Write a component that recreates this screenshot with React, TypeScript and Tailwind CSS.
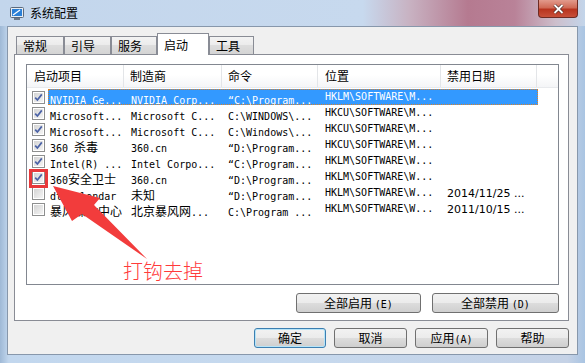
import React from 'react';

const CJK = /([\u2E80-\u9FFF\uFF00-\uFFEF]+)/;

type Row = {
  on: boolean;
  name: string;
  maker: string;
  cmd: string;
  loc: string;
  date?: string;
  sel?: boolean;
};

const rows: Row[] = [
  { on: true, name: 'NVIDIA Ge...', maker: 'NVIDIA Corp...', cmd: '“C:\\Program...', loc: 'HKLM\\SOFTWARE\\M...', sel: true },
  { on: true, name: 'Microsoft...', maker: 'Microsoft C...', cmd: 'C:\\WINDOWS\\...', loc: 'HKCU\\SOFTWARE\\M...' },
  { on: true, name: 'Microsoft...', maker: 'Microsoft C...', cmd: 'C:\\Windows\\...', loc: 'HKCU\\SOFTWARE\\M...' },
  { on: true, name: '360 杀毒', maker: '360.cn', cmd: '“D:\\Program...', loc: 'HKCU\\SOFTWARE\\M...' },
  { on: true, name: 'Intel(R) ...', maker: 'Intel Corpo...', cmd: '“C:\\Program...', loc: 'HKLM\\SOFTWARE\\W...' },
  { on: true, name: '360安全卫士', maker: '360.cn', cmd: '“D:\\Program...', loc: 'HKLM\\SOFTWARE\\W...' },
  { on: false, name: 'dt Calendar', maker: '未知', cmd: '“D:\\Program...', loc: 'HKLM\\SOFTWARE\\W...', date: '2014/11/25 ...' },
  { on: false, name: '暴风媒体中心', maker: '北京暴风网...', cmd: 'C:\\Program ...', loc: 'HKLM\\SOFTWARE\\W...', date: '2011/10/15 ...' },
];

// SimSun-like mix: ascii in a mono face, hanzi in a CJK face
function Mixed({ text }: { text: string }) {
  const parts = text.split(CJK);
  return (
    <>
      {parts.map((p, i) =>
        i % 2 === 1 ? (
          <span key={i} className="font-['Noto_Sans_CJK_SC',sans-serif] text-[12px]">{p}</span>
        ) : (
          <span key={i} className="font-['DejaVu_Sans_Mono',monospace] text-[10px] whitespace-pre">{p}</span>
        )
      )}
    </>
  );
}

function CheckBox({ on }: { on: boolean }) {
  return (
    <div className="w-[13px] h-[13px] border border-[#8e8f8f] bg-white p-px">
      <div className="w-full h-full bg-[linear-gradient(135deg,#d4d4d4,#f4f4f4)] flex items-center justify-center">
        {on && (
          <svg width="9" height="9" viewBox="0 0 9 9">
            <path d="M1.2 4.6 L3.4 7 L7.8 1.4" fill="none" stroke="#4b62a6" strokeWidth="1.7" />
          </svg>
        )}
      </div>
    </div>
  );
}

function Button({ label, w, focus }: { label: React.ReactNode; w: string; focus?: boolean }) {
  return (
    <div
      className={`${w} h-[20px] rounded-[3px] border ${
        focus ? 'border-[#3c7fb1] shadow-[inset_0_0_0_1px_#b6e4f8]' : 'border-[#707070]'
      } bg-[linear-gradient(#f2f2f2,#ebebeb_50%,#dddddd_50%,#cfcfcf)] flex items-center justify-center text-[12px] text-black leading-none`}
    >
      {label}
    </div>
  );
}

function Tab({ label, w, sel }: { label: string; w: string; sel?: boolean }) {
  return (
    <div
      className={`${w} border border-b-0 border-[#898c95] flex items-center pl-[6px] text-[12px] font-['Noto_Sans_CJK_SC',sans-serif] leading-none ${
        sel ? 'h-[22px] -mb-px bg-white relative z-10' : 'h-[18px] bg-[linear-gradient(#f3f3f3,#ebebeb_50%,#dddddd_50%,#d4d4d4)]'
      }`}
    >
      {label}
    </div>
  );
}

const headers = [
  { t: '启动项目', w: 'w-[97px]', p: 'pl-[7px]' },
  { t: '制造商', w: 'w-[98px]', p: 'pl-[6px]' },
  { t: '命令', w: 'w-[96px]', p: 'pl-[6px]' },
  { t: '位置', w: 'w-[123px]', p: 'pl-[7px]' },
  { t: '禁用日期', w: 'w-[96px]', p: 'pl-[6px]' },
];

export default function App() {
  return (
    <div className="relative w-[585px] h-[363px] overflow-hidden flex flex-col bg-[linear-gradient(to_right,#9fb9d6,#c2d7ee_1.5%,#c6d9ee_50%,#c5d2e6_97%,#a9c4e2)] font-['Noto_Sans_CJK_SC',sans-serif]">
      {/* title bar */}
      <div className="h-[26px] flex items-start bg-[linear-gradient(to_right,#c3d6ec_0%,#c7d9ee_62%,#c8b2c2_70%,#b57a90_80%,#b98298_88%,#cdbfcc_95%,#c3d5ea_100%)]">
        <svg className="ml-[10px] mt-[7px]" width="14" height="13" viewBox="0 0 14 13">
          <rect x="0.5" y="0.5" width="13" height="10" rx="1" fill="#e8eef4" stroke="#5c6a7c" />
          <rect x="2" y="2" width="10" height="7" fill="#2a7fd6" />
          <path d="M3 8 L10 3" stroke="#ffffff" strokeWidth="1.3" />
          <rect x="4" y="11" width="6" height="2" fill="#6c7888" />
        </svg>
        <span className="ml-[6px] mt-[5px] text-[12px] leading-[16px] text-black">系统配置</span>
        <div className="ml-auto mr-[7px] w-[40px] h-[18px] rounded-b-[4px] border border-t-0 border-[#6e2b24] bg-[linear-gradient(#e29a8c,#d06a56_45%,#b8341f_55%,#c8503a)] flex items-center justify-center">
          <svg width="11" height="10" viewBox="0 0 11 10">
            <path d="M1.5 1 L9.5 9 M9.5 1 L1.5 9" stroke="#4b2a26" strokeWidth="3.2" />
            <path d="M1.5 1 L9.5 9 M9.5 1 L1.5 9" stroke="#ffffff" strokeWidth="1.8" />
          </svg>
        </div>
      </div>

      {/* frame + client */}
      <div className="flex-1 px-[7px]">
        <div className="w-[571px] h-[329px] border border-[#8797ab] bg-[#f0f0f0] pl-[6px] pt-[6px]">
          {/* tabs */}
          <div className="h-[21px] pl-[2px] flex items-end">
            <Tab label="常规" w="w-[48px]" />
            <Tab label="引导" w="w-[47px]" />
            <Tab label="服务" w="w-[46px]" />
            <Tab label="启动" w="w-[52px]" sel />
            <Tab label="工具" w="w-[45px]" />
          </div>

          {/* tab page */}
          <div className="w-[555px] h-[267px] border border-[#898c95] bg-white pl-[11px] pt-[9px]">
            {/* list view */}
            <div className="w-[533px] h-[221px] border border-[#828790] bg-white flex flex-col">
              <div className="h-[23px] flex bg-[linear-gradient(#ffffff,#ffffff_45%,#f4f5f7)] border-b border-[#e8eaed]">
                {headers.map((h) => (
                  <div
                    key={h.t}
                    className={`${h.w} ${h.p} border-r border-[#e3e5e8] flex items-center text-[12px] leading-none text-black`}
                  >
                    {h.t}
                  </div>
                ))}
                <div className="flex-1" />
              </div>
              <div className="pt-px">
                {rows.map((r, i) => (
                  <div key={i} className="h-[16px] flex">
                    <div className="w-[21px] pl-[5px] flex items-center">
                      <CheckBox on={r.on} />
                    </div>
                    <div
                      className={`w-[490px] flex items-center leading-none ${
                        r.sel
                          ? 'bg-[#3399ff] text-white outline-1 outline-dotted outline-[#d9822b] -outline-offset-1'
                          : 'text-black'
                      }`}
                    >
                      <div className="w-[76px] pl-[2px] whitespace-nowrap">
                        <Mixed text={r.name} />
                      </div>
                      <div className="w-[98px] pl-[7px] whitespace-nowrap">
                        <Mixed text={r.maker} />
                      </div>
                      <div className="w-[96px] pl-[6px] whitespace-nowrap">
                        <Mixed text={r.cmd} />
                      </div>
                      <div className="w-[123px] pl-[7px] whitespace-nowrap font-['DejaVu_Sans_Mono',monospace] text-[10px] font-normal">
                        {r.loc}
                      </div>
                      <div className="w-[96px] pl-[6px] whitespace-nowrap font-['DejaVu_Sans',sans-serif] text-[11px]">
                        {r.date}
                      </div>
                    </div>
                  </div>
                ))}
              </div>
            </div>

            <div className="w-[533px] mt-[8px] flex justify-end gap-[11px]">
              <Button w="w-[125px]" label={<span>全部启用 <span className="font-['DejaVu_Sans_Mono',monospace] text-[10px]">(E)</span></span>} />
              <Button w="w-[127px]" label={<span>全部禁用 <span className="font-['DejaVu_Sans_Mono',monospace] text-[10px]">(D)</span></span>} />
            </div>
          </div>

          {/* dialog buttons */}
          <div className="mt-[7px] pr-[8px] flex justify-end gap-[8px]">
            <Button w="w-[72px]" label="确定" focus />
            <Button w="w-[73px]" label="取消" />
            <Button w="w-[73px]" label={<span>应用<span className="font-['DejaVu_Sans_Mono',monospace] text-[10px]">(A)</span></span>} />
            <Button w="w-[73px]" label="帮助" />
          </div>
        </div>
      </div>
      <div className="h-[8px]" />

      {/* annotation overlay */}
      <div className="absolute left-[29px] top-[169px] w-[19px] h-[19px] border-[3px] border-[#e8383a]" />
      <svg className="absolute left-0 top-0 pointer-events-none" width="585" height="363">
        <polygon
          points="53,186 100,198 94,205 147,259 82,214 72,221"
          fill="#f23c3c"
        />
      </svg>
      <div className="absolute left-[123px] top-[258px] text-[20px] leading-[26px] text-[#ff3b3b] font-['Noto_Sans_CJK_SC',sans-serif] font-light">
        打钩去掉
      </div>
    </div>
  );
}
